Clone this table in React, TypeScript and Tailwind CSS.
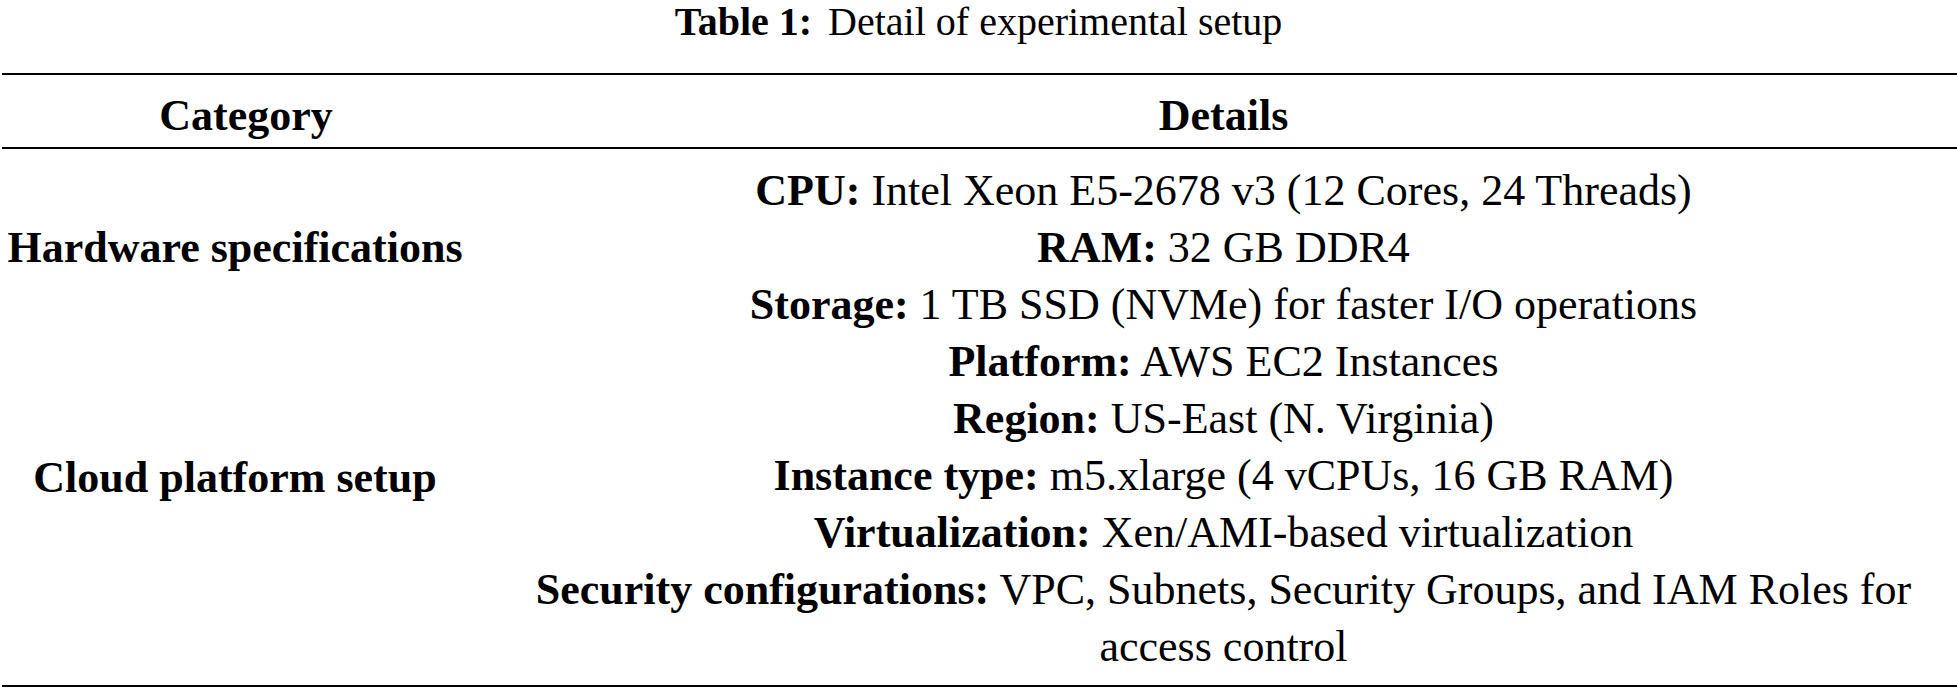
const hardware: [string, string][] = [
  ["CPU:", "Intel Xeon E5-2678 v3 (12 Cores, 24 Threads)"],
  ["RAM:", "32 GB DDR4"],
  ["Storage:", "1 TB SSD (NVMe) for faster I/O operations"],
];

const cloud: [string, React.ReactNode][] = [
  ["Platform:", "AWS EC2 Instances"],
  ["Region:", "US-East (N. Virginia)"],
  ["Instance type:", "m5.xlarge (4 vCPUs, 16 GB RAM)"],
  ["Virtualization:", "Xen/AMI-based virtualization"],
  [
    "Security configurations:",
    <>
      VPC, Subnets, Security Groups, and IAM Roles for
      <br />
      access control
    </>,
  ],
];

function DetailLines({ items }: { items: [string, React.ReactNode][] }) {
  return (
    <div className="flex flex-col items-center text-center">
      {items.map(([label, value]) => (
        <p key={label} className="leading-[57px] whitespace-nowrap">
          <span className="font-bold">{label}</span> {value}
        </p>
      ))}
    </div>
  );
}

export default function App() {
  return (
    <div className="w-[1957px] h-[689px] bg-white text-black font-['Liberation_Serif',serif] text-[44px] overflow-hidden">
      {/* Caption */}
      <div className="h-[44px] flex items-center justify-center text-[40px] leading-none">
        <span className="font-bold">Table 1:</span>
        <span className="ml-4">Detail of experimental setup</span>
      </div>

      <div className="mt-[29px] ml-[2px] border-t-2 border-b-2 border-black">
        {/* Header */}
        <div className="flex h-[74px] items-center border-b-2 border-black font-bold pt-[10px]">
          <div className="w-[488px] text-center">Category</div>
          <div className="flex-1 text-center">Details</div>
        </div>

        {/* Body */}
        <div className="pt-[13px] pb-[10px]">
          <div className="flex">
            <div className="w-[466px] flex items-center justify-center font-bold whitespace-nowrap">
              Hardware specifications
            </div>
            <div className="flex-1 ml-[22px]">
              <DetailLines items={hardware} />
            </div>
          </div>
          <div className="flex">
            <div className="w-[466px] flex items-center justify-center font-bold pb-[52px] whitespace-nowrap">
              Cloud platform setup
            </div>
            <div className="flex-1 ml-[22px]">
              <DetailLines items={cloud} />
            </div>
          </div>
        </div>
      </div>
    </div>
  );
}
